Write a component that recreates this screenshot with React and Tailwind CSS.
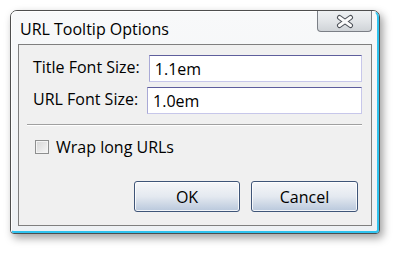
export default function App() {
  const font = { fontFamily: '"Segoe UI", "Open Sans", "Noto Sans", sans-serif' };

  return (
    <div className="w-[398px] h-[253px] bg-white pt-[10px] pl-[10px]" style={font}>
      {/* Window */}
      <div className="w-[370px] h-[224px] rounded-t-[7px] rounded-b-[4px] border border-[#4e4e4e] shadow-[3px_4px_9px_rgba(0,0,0,0.38)] bg-[#f4f6f8]">
        <div className="h-full flex flex-col rounded-t-[6px] rounded-b-[3px] border-r-2 border-b-2 border-[#2fc3ef] border-t border-l border-t-white border-l-white bg-gradient-to-b from-[#f8f9fa] to-[#eef1f4] pl-[6px] pr-[5px] pb-[5px]">
          {/* Title bar */}
          <div className="h-[32px] flex items-start justify-between">
            <div className="pt-[7px] pl-[2px] text-[16px] leading-[20px] text-black">URL Tooltip Options</div>
            <button className="w-[55px] h-[21px] -mt-px rounded-b-[4px] border border-t-0 border-[#7b7f86] bg-gradient-to-b from-[#eef0f2] via-[#e2e5e8] to-[#d0d4d8] flex items-center justify-center">
              <svg width="18" height="15" viewBox="0 0 18 15">
                <g strokeLinecap="round">
                  <line x1="3.5" y1="3.5" x2="14.5" y2="11.5" stroke="#4b4f56" strokeWidth="5" />
                  <line x1="14.5" y1="3.5" x2="3.5" y2="11.5" stroke="#4b4f56" strokeWidth="5" />
                  <line x1="3.5" y1="3.5" x2="14.5" y2="11.5" stroke="#fbfbfb" strokeWidth="3" />
                  <line x1="14.5" y1="3.5" x2="3.5" y2="11.5" stroke="#fbfbfb" strokeWidth="3" />
                </g>
              </svg>
            </button>
          </div>

          {/* Client area */}
          <div className="flex-1 border border-[#7f7f7f] bg-[#f0f0f0] pl-[8px] pr-[9px] pt-[10px] flex flex-col text-[16px] text-black">
            <div className="flex items-center h-[27px] pl-[6px]">
              <span className="leading-[20px] -mt-[3px]">Title Font Size:</span>
              <div className="ml-[9px] flex-1 h-[27px] bg-white border border-[#c7c7ea] border-t-[#5e5e9c] border-l-[#a9a9d6] pl-[5px] flex items-center leading-[20px]">
                1.1em
              </div>
            </div>
            <div className="flex items-center h-[27px] pl-[6px] mt-[5px]">
              <span className="leading-[20px] -mt-[3px]">URL Font Size:</span>
              <div className="ml-[9px] flex-1 h-[27px] bg-white border border-[#c7c7ea] border-t-[#5e5e9c] border-l-[#a9a9d6] pl-[5px] flex items-center leading-[20px]">
                1.0em
              </div>
            </div>

            <div className="mt-[10px] h-px bg-[#a0a0a0] border-b border-white box-content" />

            <div className="mt-[11px] flex items-center pl-[8px]">
              <div className="w-[14px] h-[14px] border border-[#8e8f8f] bg-gradient-to-br from-[#d6d6d6] to-[#f7f7f7] shadow-[inset_0_0_0_1px_#f4f4f4]" />
              <span className="ml-[7px] leading-[20px]">Wrap long URLs</span>
            </div>

            <div className="mt-auto mb-[13px] flex justify-end gap-[11px] pr-[4px]">
              <button className="w-[106px] h-[31px] rounded-[3px] border border-[#3f5578] bg-gradient-to-b from-[#f6f7f9] via-[#e4e9f0] to-[#b9c8dc] shadow-[inset_0_0_0_1px_rgba(255,255,255,0.8)] leading-[20px]">
                OK
              </button>
              <button className="w-[107px] h-[31px] rounded-[3px] border border-[#3f5578] bg-gradient-to-b from-[#f6f7f9] via-[#e4e9f0] to-[#b9c8dc] shadow-[inset_0_0_0_1px_rgba(255,255,255,0.8)] leading-[20px]">
                Cancel
              </button>
            </div>
          </div>
        </div>
      </div>
    </div>
  );
}
